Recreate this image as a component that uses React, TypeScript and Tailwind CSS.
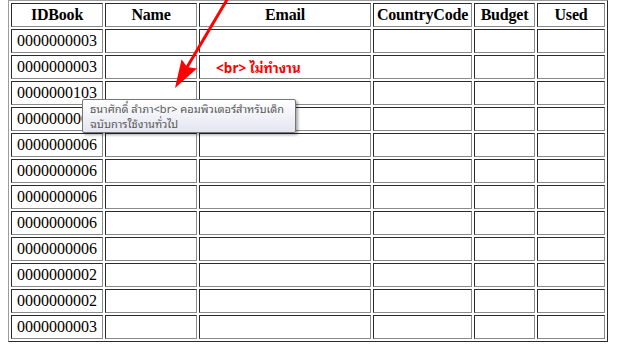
const rows = [
  "0000000003",
  "0000000003",
  "0000000103",
  "0000000006",
  "0000000006",
  "0000000006",
  "0000000006",
  "0000000006",
  "0000000006",
  "0000000002",
  "0000000002",
  "0000000003",
];

const columns = [
  { label: "IDBook", width: "w-[92px]" },
  { label: "Name", width: "w-[92px]" },
  { label: "Email", width: "w-[172px]" },
  { label: "CountryCode", width: "w-[99px]" },
  { label: "Budget", width: "w-[61px]" },
  { label: "Used", width: "w-[68px]" },
];

// inset look of an old border="1" table cell
const cell =
  "h-[24px] p-0 border border-t-[#2b2b2b] border-l-[#2b2b2b] border-r-[#8a8a8a] border-b-[#8a8a8a] leading-[18px]";

const thai =
  '"Tahoma", "Noto Sans Thai Looped", "Noto Serif Thai", "Noto Sans Thai", "Noto Sans", sans-serif';

export default function App() {
  return (
    <div className="relative w-[618px] h-[348px] overflow-hidden bg-white">
      <table
        className="ml-[8px] w-[600px] table-fixed border-separate border-spacing-[2px] border border-t-[#9c9c9c] border-l-[#9c9c9c] border-r-[#2b2b2b] border-b-[#2b2b2b] text-[16px] text-black"
        style={{ fontFamily: '"Liberation Serif", "Times New Roman", serif' }}
      >
        <thead>
          <tr>
            {columns.map((c) => (
              <th
                key={c.label}
                className={`${cell} ${c.width} font-bold text-center tracking-[-0.2px] whitespace-nowrap`}
              >
                {c.label}
              </th>
            ))}
          </tr>
        </thead>
        <tbody>
          {rows.map((id, i) => (
            <tr key={i}>
              <td className={`${cell} px-[5px] text-left`}>{id}</td>
              <td className={cell}></td>
              <td className={cell}></td>
              <td className={cell}></td>
              <td className={cell}></td>
              <td className={cell}></td>
            </tr>
          ))}
        </tbody>
      </table>

      {/* note written over the email column */}
      <div
        className="absolute left-[216px] top-[58px] text-[13.5px] font-bold leading-[18px] text-[#ff0000] whitespace-nowrap"
        style={{ fontFamily: thai }}
      >
        {"<br> ไม่ทำงาน"}
      </div>

      {/* hover tooltip of the name cell */}
      <div
        className="absolute left-[82px] top-[99px] w-[214px] h-[34px] rounded-[2px] border border-[#767676] bg-gradient-to-b from-white to-[#e4e5f0] shadow-[2px_2px_3px_rgba(0,0,0,0.35)] pl-[7px] pt-[1px] text-[11px] leading-[15px] text-[#575757] whitespace-nowrap"
        style={{ fontFamily: thai }}
      >
        <div>{"ธนาศักดิ์ ลำภา<br> คอมพิวเตอร์สำหรับเด็ก"}</div>
        <div>ฉบับการใช้งานทั่วไป</div>
      </div>

      <svg className="absolute inset-0 w-[618px] h-[348px] pointer-events-none" viewBox="0 0 618 348">
        <line x1="228" y1="-2" x2="186" y2="69" stroke="#ff0000" strokeWidth="3" />
        <polygon points="175,88 181.6,59.3 187,67 197,68.5" fill="#ff0000" />
      </svg>
    </div>
  );
}
